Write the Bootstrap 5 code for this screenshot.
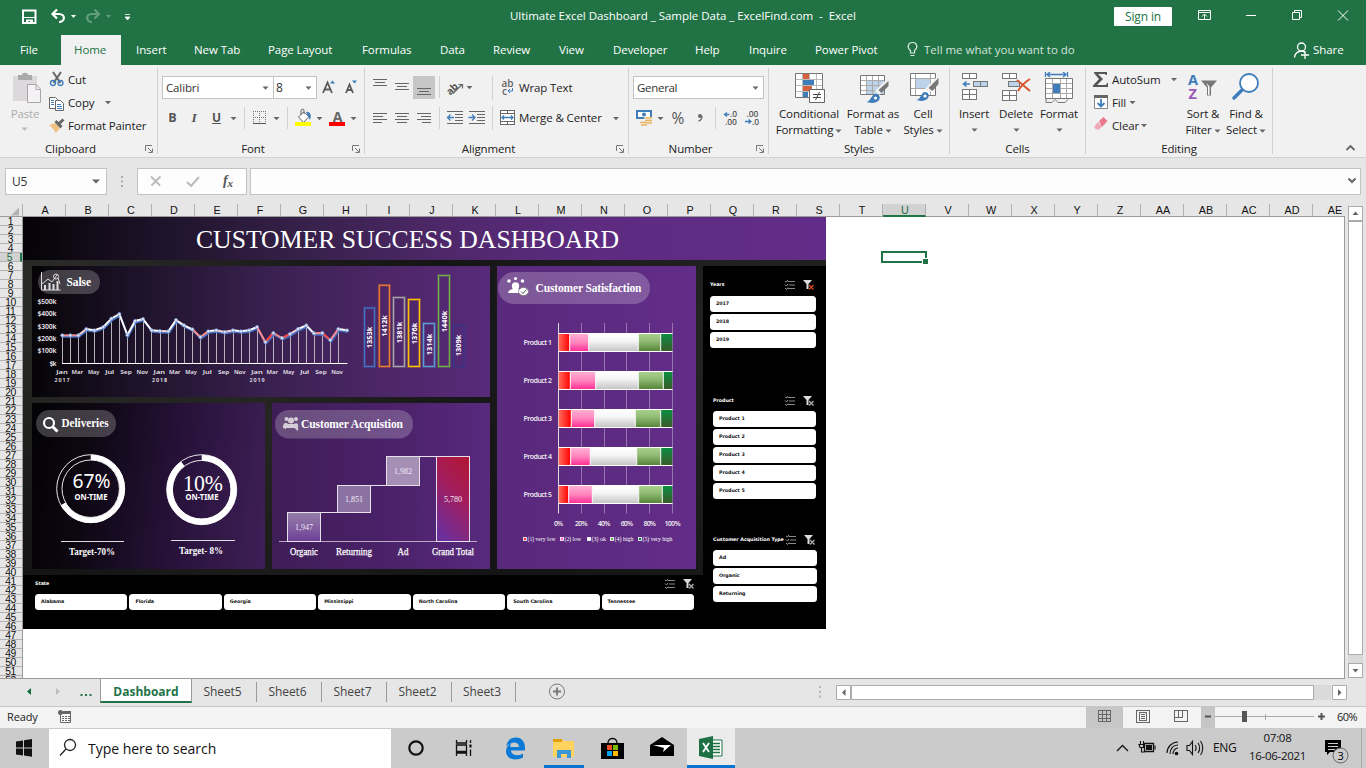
<!DOCTYPE html>
<html lang="en">
<head>
<meta charset="utf-8">
<title>Ultimate Excel Dashboard</title>
<link rel="stylesheet" href="https://cdn.jsdelivr.net/npm/bootstrap@5.3.0/dist/css/bootstrap.min.css">
<script src="https://cdn.jsdelivr.net/npm/bootstrap@5.3.0/dist/js/bootstrap.bundle.min.js"></script>
<style>
:root{--xl:#217346}
body{width:1366px;height:768px;overflow:hidden;font-family:"Open Sans","Noto Sans",sans-serif;font-size:11.5px;letter-spacing:-.13px;line-height:16px;color:#222;background:#e6e6e6}
svg{display:block;flex:none}
svg.ov{overflow:visible}
.ln{shape-rendering:crispEdges}
.titlebar{height:35px;background:var(--xl);color:#fff;display:grid;grid-template-columns:510px 604px 58px 194px;align-items:center;padding-bottom:3px}
.titlebar .doc{letter-spacing:-.03px}
.signin{background:#fff;color:var(--xl);height:19px;line-height:19px;font-size:12px;border-radius:1px}
.tabs{height:30px;background:var(--xl);display:grid;grid-template-columns:8px 53px 60px 60px 74px 94px 78px 53px 66px 54px 82px 54px 66px 103px 19px 369px 20px 1fr;color:#fff;line-height:30px;white-space:nowrap;letter-spacing:-.08px}
.tabs a{color:#fff;text-decoration:none;padding-left:13px}
.tabs a:nth-of-type(1){padding-left:12px}
.tabs a.active{background:#f1f1f1;color:var(--xl)}
.tabs a.wide{padding-left:15px}
.tabs .tell{color:#d3e3da;letter-spacing:-.02px}
.ribbon{height:93px;background:#f1f1f1;border-bottom:1px solid #d2d2d2;white-space:nowrap}
.grp{position:relative;height:92px;border-right:1px solid transparent;border-image:linear-gradient(transparent 4px,#d0d0d0 4px,#d0d0d0 88px,transparent 88px) 1;flex:none}
.glabel{position:absolute;left:0;right:0;bottom:0;height:16px;text-align:center}
.glabel.launch{right:16px}
.g-clip{width:158px}.g-font{width:207px}.g-align{width:264px}.g-num{width:140px}.g-sty{width:181px}.g-cells{width:136px}.g-edit{width:187px}
.r1{padding-top:11px;height:35px}
.r2{height:30px;padding-top:6px}
.l1{padding-top:6px;height:26px}.l2{padding-top:3px;height:23px}.l3{padding-top:3px}
.l1 b,.l2 b,.l3 b{font-weight:400;position:relative;top:1px}
.rt{padding:4px 0 0 1px}
.edcol{width:96px;padding-left:5px}
.pick{height:23px;border:1px solid #c3c3c3;background:#fff;line-height:22px;padding-left:3px;color:#333}
.pick.wide{width:112px;margin-left:4px}.pick.narrow{width:44px;margin-left:-1px;padding-left:2px;font-size:12px}.pick.num{width:131px;margin-left:4px;letter-spacing:-.3px}
.pick svg{margin:9px 4px 0 0}
.big{display:grid;padding-top:7px}
.big>div{display:flex;flex-direction:column;align-items:center;text-align:center}
.big svg.i{margin-bottom:2px}
.big svg.c{display:inline;margin-left:2px}
.g-sty .big{grid-template-columns:68px 60px 40px;padding-left:6px}
.g-cells .big{grid-template-columns:42px 42px 44px;padding-left:3px}
.g-edit .big{grid-template-columns:42px 44px}
.formula{height:46px;padding-top:10px}
.fbox{height:27px;border:1px solid #c3c3c3;background:#fdfdfd}
.namebox{width:102px;margin-left:5px;padding-left:6px;line-height:25px;font-size:12px;color:#333}
.fx{width:110px}.fin{width:1111px;margin-left:3px}
.colhead{height:13px;width:1345px;overflow:hidden;font:10.8px/13px "Liberation Sans",sans-serif;letter-spacing:0;color:#111}
.colhead>div{width:43px;flex:none;text-align:center;border-right:1px solid #b1b1b1;border-bottom:1px solid #9b9b9b;padding-left:2px;height:13px}
.colhead>div:first-child{width:23px}
.colhead>div.sel{background:#d2d2d2;color:#1e6a42;border-bottom:2px solid var(--xl)}
.sheet{height:461px}
.rowhead{width:23px;border-right:1px solid #9b9b9b;overflow:hidden;font:10.3px/9px "Liberation Sans",sans-serif;letter-spacing:-.4px;color:#111;height:461px}
.rowhead>div{height:9px;border-bottom:1px solid #b3b3b3;text-align:center;padding-right:1px}
.rowhead>div.sel{background:#d2d2d2;color:#1e6a42;border-right:2px solid var(--xl)}
.cells{position:relative;width:1322px;background:#fff;border-right:1px solid #9b9b9b;border-bottom:1px solid #9b9b9b;height:462px}
.cursor{position:absolute;left:858px;top:34px;width:46px;height:12px;border:2px solid var(--xl)}
.cursor::after{content:"";position:absolute;right:-4px;bottom:-4px;width:7px;height:7px;background:var(--xl);border:1px solid #fff}
.dash{width:803px;height:412px;background:radial-gradient(circle at 5% 20%,#2d2d2b,transparent 30%),radial-gradient(circle at 30% 50%,#252524,transparent 40%),radial-gradient(circle at 90% 30%,#252525,transparent 40%),#151515;display:grid;grid-template-columns:9px 233px 7px 218px 7px 199px 7px 123px;grid-template-rows:43px 6px 131px 6px 166px 6px 54px;letter-spacing:0;color:#fff}
.dash .head{grid-area:1/1/2/9;background:linear-gradient(90deg,#050306,#1d1228 16%,#352048 34%,#4e2869 52%,#5c2b80 70%,#622d88);font:26px/45px "Liberation Serif",serif;padding-left:173px}
.p-sales{grid-area:3/2/4/5;background:linear-gradient(90deg,#060407,#1d1228 22%,#38204e 50%,#4c2666 75%,#582a7a)}
.p-del{grid-area:5/2/6/3;background:linear-gradient(97deg,#030204,#0d0712 25%,#27123a 62%,#3f1f57)}
.p-acq{grid-area:5/4/6/5;background:linear-gradient(90deg,#3f1d57,#4a2168 50%,#58297d)}
.p-sat{grid-area:3/6/6/7;background:linear-gradient(90deg,#59297c,#622d88)}
.p-sl{grid-area:3/8/8/9;background:#000}
.p-st{grid-area:7/1/8/8;background:#000;padding:4px 0 0 12px}
.slicer{font-family:"DejaVu Sans",sans-serif;font-weight:bold;font-size:4.8px;line-height:10px;letter-spacing:-.05px;white-space:nowrap}
.slicer .sh{height:10px;display:flex;justify-content:space-between}
.slicer .it{background:#fff;color:#111;height:16px;line-height:15px;border-radius:3.5px;margin-bottom:2px;padding-left:6px}
.slicer .sh+*{margin-top:6px}
.s-y{padding:14px 10px 0 7px;height:131px}
.s-y .sh svg{margin-right:2px}
.s-p{padding:0 10px 0 10px;height:139px;margin-top:-1px}
.s-p .sh+*{margin-top:5px}
.s-p .sh svg,.s-a .sh svg{margin-right:2px}
.s-a{padding:0 9px 0 10px}
.s-a .sh+*{margin-top:5px}
.stw{width:659px}
.hz{display:grid;grid-template-columns:repeat(7,1fr);gap:2px;width:659px;margin-top:5px}
.vscroll{width:15px;margin-left:3px;margin-top:-11px;height:472px}
.vscroll .thumb{height:434px}.vscroll .arr{height:15px}.vscroll .rest{background:#dadada}
.sb{background:#fff;border:1px solid #ababab}
.stabs{height:28px;color:#444;font-size:12px;line-height:26px;letter-spacing:0}
.stabs .nm{width:65px;height:20px;line-height:20px;text-align:center;border-right:1px solid #9b9b9b;margin-top:4px;padding-right:3px;flex:none;letter-spacing:-.1px}
.stabs .nm.last{width:64px}
.stabs .act{width:92px;height:25px;background:#fff;border:1px solid #9b9b9b;border-top:0;border-bottom:2px solid var(--xl);color:var(--xl);font-weight:bold;text-align:center;line-height:27px;flex:none;letter-spacing:0}
.status{height:22px;background:#f3f3f3;border-top:1px solid #c6c6c6;font-size:11px;line-height:20px}
.status .rd{width:58px;padding-left:7px}.status .zm{width:29px;letter-spacing:-.5px}
.taskbar{height:40px;background:#cbcbcb;color:#111}
.search{width:342px;height:39px;margin-top:1px;background:#fff;font-size:14px;letter-spacing:-.03px;line-height:39px}
.lang{width:35px;line-height:40px;font-size:12px;letter-spacing:-.4px}
.clock{width:59px;line-height:18px;padding-top:1px;letter-spacing:-.3px}
</style>
</head>
<body class="d-flex flex-column">
<svg width="0" height="0" class="position-absolute"><defs>
<path id="car" d="M-3-1.5h6L0 1.7z" fill="#666"/>
<g id="lau" fill="none" stroke="#777"><path d="M.5 6V.5H7"/><path d="M3 3l4 4M7.5 3.500V7.500H3.500"/></g>
<linearGradient id="lr" x2="1" y2="0"><stop stop-color="#ff6a5c"/><stop offset="1" stop-color="#f00"/></linearGradient>
<linearGradient id="lp" x2="0" y2="1"><stop stop-color="#ffb2d4"/><stop offset=".5" stop-color="#ff85bd"/><stop offset="1" stop-color="#ff2a94"/></linearGradient>
<linearGradient id="lw" x2="0" y2="1"><stop stop-color="#fff"/><stop offset=".4" stop-color="#f6f6f6"/><stop offset="1" stop-color="#c3c3c3"/></linearGradient>
<linearGradient id="lg" x2="0" y2="1"><stop stop-color="#a9d18e"/><stop offset=".4" stop-color="#93bd77"/><stop offset="1" stop-color="#548235"/></linearGradient>
<linearGradient id="ld" x2="0" y2="1"><stop stop-color="#0a8e43"/><stop offset="1" stop-color="#3c5a28"/></linearGradient>
<linearGradient id="wg" x2="0" y2="1"><stop stop-color="#a48fb6" stop-opacity=".85"/><stop offset="1" stop-color="#6c3d96"/></linearGradient>
<linearGradient id="wr" x1=".7" x2=".3" y2="1"><stop stop-color="#b0173b"/><stop offset=".4" stop-color="#a31d5c"/><stop offset="1" stop-color="#6b2f9b"/></linearGradient>
<g id="sic" fill="none" stroke="#9a9a9a" stroke-width="1"><path d="M3 1.500h7M4 5h6M3 8.500h7" stroke="#888"/><path d="M0 1l1.500 1L3 0M0 4.500L1.500 6 3 4M0 8l1.500 1.500L3 7.500"/></g>
<g id="sfl"><path d="M18 0h9l-3.500 4v5h-2V4z" fill="#ddd"/><path d="M24 5l4.500 4.500m0-4.500L24 9.500" stroke="currentColor" stroke-width="1.400"/></g>
</defs></svg>

<header class="titlebar">
  <svg width="140" height="32" viewBox="0 0 140 32"><path d="M23 10.500h12.500v12.500H23z" fill="none" stroke="#fff" stroke-width="2"/><path d="M22 17h14v1H22z" fill="#fff"/><path d="M26 19.500h7V23h-3v-2h-1.500v2H26z" fill="#fff"/>
    <g fill="none" stroke="#fff" stroke-width="2.200"><path d="M53 14h6c7 0 6 8 0 8"/><path d="M57 9.500l-4.500 4.500 4.500 4.500"/><g opacity=".3"><path d="M98 14h-6c-7 0-6 8 0 8"/><path d="M94.500 9.500l4.500 4.500-4.500 4.500"/></g></g>
    <path d="M71 15h5l-2.500 3z" fill="#fff"/><path d="M106 15h5l-2.500 3z" fill="#fff" opacity=".3"/><path d="M125 14.500h5M125 17h5l-2.500 3z" fill="#fff" stroke="#fff" stroke-width=".8"/></svg>
  <span class="doc text-nowrap">Ultimate Excel Dashboard _ Sample Data _ ExcelFind.com &nbsp;-&nbsp; Excel</span>
  <span class="signin text-center">Sign in</span>
  <svg width="194" height="32" viewBox="1172 0 194 32" fill="none" stroke="#fff" class="ov"><path d="M1198.500 10.500h12v9h-12zM1198.500 12.500h12M1204.500 19v-5M1202 16.500l2.500-2.500 2.500 2.500"/><path d="M1246 15.500h10"/><path d="M1292.500 12.500h7v7h-7zM1294.500 12.500v-2h7v7h-2"/><path d="M1338 10.500l10 10M1348 10.500l-10 10"/></svg>
</header>

<nav class="tabs">
  <i></i><a>File</a><a class="active">Home</a><a class="wide">Insert</a><a>New Tab</a><a>Page Layout</a><a>Formulas</a><a>Data</a><a>Review</a><a>View</a><a>Developer</a><a>Help</a><a>Inquire</a><a>Power Pivot</a>
  <svg width="14" height="30" viewBox="905 35 14 30" fill="none" stroke="#dbe9e1" stroke-width="1.200"><path d="M910.500 53v-2.500c-4-3-2.500-8 2-8s6 5 2 8V53zM910.500 55.500h4"/></svg>
  <span class="tell">Tell me what you want to do</span>
  <svg width="18" height="30" viewBox="1293 35 18 30" fill="none" stroke="#fff" stroke-width="1.300"><circle cx="1301.500" cy="47" r="4"/><path d="M1294.500 57.500c.5-4 3-6 6.500-6.500 2 0 3 .5 4 1.500M1301 55h8M1305 51v8"/></svg>
  <span>Share</span>
</nav>

<section class="ribbon d-flex">
  <div class="grp g-clip d-flex">
    <svg width="48" height="75" viewBox="0 65 48 75"><path d="M13 76h24v25H13z" fill="#dcd8dc"/><path d="M18 75h4c0-3 6-3 6 0h4v5H18z" fill="#aaa"/><path d="M27.500 84.500h8.500l4.500 4.500v13.500h-13z" fill="#f5f2f6" stroke="#a8a8a8"/><path d="M36 84.500v5h4.500" fill="none" stroke="#a8a8a8"/><text x="25" y="118" text-anchor="middle" fill="#ababab">Paste</text><use href="#car" x="24.500" y="129" opacity=".4"/></svg>
    <div class="d-flex flex-column">
      <div class="d-flex l1"><svg width="20" height="20" viewBox="48 71 20 20" fill="none"><path d="M53 72l7.500 11M61 72l-7.500 11" stroke="#666" stroke-width="2"/><circle cx="53" cy="83" r="2.500" stroke="#3f7dba" stroke-width="1.300"/><circle cx="60.500" cy="83" r="2.500" stroke="#3f7dba" stroke-width="1.300"/></svg><b>Cut</b></div>
      <div class="d-flex l2"><svg width="20" height="20" viewBox="48 92 20 20" stroke="#666" fill="#fff"><path d="M49.500 95.500h6l2 2v9h-8z"/><path d="M51 98.500h3M51 100.500h3M51 102.500h3" stroke="#3f7dba"/><path d="M55.500 98.500h5l3 3v7h-8z"/><path d="M57 102.500h4M57 104.500h5M57 106.500h5" stroke="#3f7dba"/></svg><b>Copy</b><svg width="24" height="16" viewBox="95 94 24 16"><use href="#car" x="109" y="102.500"/></svg></div>
      <div class="d-flex l3"><svg width="20" height="18" viewBox="48 116 20 18"><path d="M49 124l7-2 4 5-4 5c-2-3-4-6-7-8z" fill="#eec180"/><path d="M54.500 121l2-2 6 6-2 2.500z" fill="#666"/><path d="M58.500 123l5-4.500" stroke="#666" stroke-width="3"/></svg><b>Format Painter</b></div>
    </div>
    <div class="glabel launch">Clipboard</div><svg class="position-absolute bottom-0 end-0 mb-1 me-1" width="8" height="8"><use href="#lau"/></svg>
  </div>

  <div class="grp g-font">
    <div class="d-flex r1"><div class="pick wide d-flex justify-content-between">Calibri<svg width="7" height="4" viewBox="-3.500 -2 7 4"><use href="#car"/></svg></div><div class="pick narrow d-flex justify-content-between">8<svg width="7" height="4" viewBox="-3.500 -2 7 4"><use href="#car"/></svg></div>
      <svg width="44" height="24" viewBox="317 76 44 24" fill="none" stroke="#5a5a5a" stroke-width="1.800"><path d="M323 93l4.500-10.500 4.500 10.500M325 89.500h5"/><path d="M346 93l3.500-8.500 3.500 8.500M347.500 90h4.500"/><path d="M330 83.500h5l-2.500-3z" fill="#3f7dba" stroke="none"/><path d="M352 80.500h5l-2.500 3z" fill="#3f7dba" stroke="none"/></svg></div>
    <div class="r2"><svg width="205" height="24" viewBox="158 106 205 24" class="ln"><g shape-rendering="auto"><text x="172.500" y="122" text-anchor="middle" font-weight="bold" fill="#555" font-size="12.500">B</text><text x="194" y="122" text-anchor="middle" font-family="Liberation Serif" font-style="italic" font-weight="bold" fill="#555" font-size="13.500">I</text><text x="216.500" y="121.500" text-anchor="middle" font-weight="bold" fill="#555" font-size="12">U</text><text x="337.500" y="122" text-anchor="middle" font-weight="bold" fill="#666" font-size="14">A</text><use href="#car" x="233.500" y="118.500"/><use href="#car" x="276.500" y="118.500"/><use href="#car" x="319.500" y="118.500"/><use href="#car" x="353.500" y="118.500"/>
      <path d="M298.500 117l5-5 5.500 4.500-5.500 6z" fill="#fff" stroke="#666"/><path d="M301 115v-5c1-1 3-1 3 0v4" fill="none" stroke="#666"/><path d="M306 112c4-1 6 3 4 8l-2-4z" fill="#3f7dba"/></g>
      <path d="M212 123.500h9" stroke="#555"/><path d="M244.500 107v22M287.500 107v22" stroke="#d0d0d0"/><path d="M253.500 111v12M265.500 111v12M259.500 111v12M253 111.500h13M253 117.500h13" stroke="#777" stroke-dasharray="1 1"/><path d="M253 123.500h13" stroke="#555"/><path d="M295 122h16v4h-16z" fill="#ff0"/><path d="M329 122h16v4h-16z" fill="#f00"/></svg></div>
    <div class="glabel launch">Font</div><svg class="position-absolute bottom-0 end-0 mb-1 me-1" width="8" height="8"><use href="#lau"/></svg>
  </div>

  <div class="grp g-align">
    <div class="d-flex r1"><svg width="153" height="24" viewBox="365 76 153 24"><path d="M413 76h22v23h-22z" fill="#c6c6c6"/><g stroke="#666" class="ln"><path d="M373 79.500h14M375 82.500h10M373 85.500h14M395 83.500h14M397 86.500h10M395 89.500h14M417 88.500h14M419 91.500h10M417 94.500h14"/><path d="M439.500 76v22M492.500 76v24" stroke="#d0d0d0"/></g><text x="447" y="92" font-size="10" fill="#555" font-weight="bold" transform="rotate(-45 453 90)">ab</text><path d="M453 93.500l9-9M458.500 84.500h4v4" stroke="#666" fill="none" stroke-width="1.200"/><use href="#car" x="469.500" y="87.500"/><text x="501.500" y="87" font-size="10" font-weight="600" fill="#666">ab</text><text x="502" y="94.500" font-size="10" font-weight="600" fill="#666">c</text><path d="M512.500 88v3h-4M510 89l-2 2 2 2" stroke="#3f7dba" fill="none"/></svg><span class="rt">Wrap Text</span></div>
    <div class="d-flex r2"><svg width="153" height="24" viewBox="365 106 153 24"><g stroke="#666" class="ln"><path d="M373 113.500h14M373 116.500h10M373 119.500h14M373 122.500h9M395 113.500h14M397 116.500h10M395 119.500h14M397 122.500h10M417 113.500h14M421 116.500h10M417 119.500h14M422 122.500h9"/><path d="M447 111.500h16M455 114.500h8M455 117.500h8M455 120.500h8M447 123.500h16M469 111.500h16M477 114.500h8M477 117.500h8M477 120.500h8M469 123.500h16"/><path d="M439.500 107v22M492.500 104v26" stroke="#d0d0d0"/><path d="M500.500 110.500h14v14h-14zM500.500 113.500h14M500.500 121.500h14M507.500 110v3M507.500 122v3" fill="#fff" /></g><path d="M454 117.500h-6M450.500 114.500l-3 3 3 3M468.500 117.500h6M472 114.500l3 3-3 3M502 117.500h11M504 115.500l-2 2 2 2M511 115.500l2 2-2 2" stroke="#3f7dba" fill="none" stroke-width="1.300"/></svg><span class="rt">Merge &amp; Center</span><svg width="22" height="24" viewBox="603 106 22 24"><use href="#car" x="617" y="118.500"/></svg></div>
    <div class="glabel launch">Alignment</div><svg class="position-absolute bottom-0 end-0 mb-1 me-1" width="8" height="8"><use href="#lau"/></svg>
  </div>

  <div class="grp g-num">
    <div class="r1"><div class="pick num d-flex justify-content-between">General<svg width="7" height="4" viewBox="-3.500 -2 7 4"><use href="#car"/></svg></div></div>
    <div class="r2"><svg width="138" height="24" viewBox="629 106 138 24"><path d="M636 110h16v9h-16z" fill="#3f7dba"/><path d="M638 112h12v5h-12z" fill="#fff"/><circle cx="644" cy="114.500" r="2" fill="#3f7dba"/><path d="M644 117h8v7h-4v2h-7v-5h4z" fill="#f1f1f1"/><path d="M645 118h7M645 120.500h7M646 123h6M640 122.500h6M641 125h6" stroke="#e8b45f" stroke-width="1.600"/><use href="#car" x="660.500" y="118.500"/><text x="671.500" y="123.500" font-size="15.500" fill="#555">%</text><circle cx="700" cy="116" r="2" fill="#666"/><path d="M702 116c0 3-1 4.500-3.500 5" stroke="#666" fill="none" stroke-width="1.300"/><path d="M715.500 107v22" stroke="#d0d0d0"/><g font-size="8.500" font-weight="600" fill="#555"><text x="730" y="117">.0</text><text x="725" y="124.500">.00</text><text x="746.500" y="117">.00</text><text x="752" y="124.500">.0</text></g><path d="M729.500 114.500h-5M727 112.500l-2.500 2 2.500 2M745 121.500h6M748.500 119.500l2.500 2-2.500 2" stroke="#3f7dba" fill="none" stroke-width="1.300"/></svg></div>
    <div class="glabel launch">Number</div><svg class="position-absolute bottom-0 end-0 mb-1 me-1" width="8" height="8"><use href="#lau"/></svg>
  </div>

  <div class="grp g-sty"><div class="big">
    <div><svg class="i" width="32" height="32" viewBox="793 72 32 32"><path d="M795.500 73.500h27v24h-27z" fill="#fff"/><path d="M795.500 79.500h27M795.500 85.500h27M795.500 91.500h27M802.500 74v24M809.500 74v24M816.500 74v24" stroke="#bbb" class="ln"/><path d="M795.500 73.500h27v24h-27z" fill="none" stroke="#777"/><path d="M803 74h6v5h-6zM803 86h9v5h-9z" fill="#d9603c"/><path d="M803 80h11v5h-11zM803 92h5v5h-5z" fill="#3f7dba"/><path d="M809.500 89.500h15v13h-15z" fill="#fff" stroke="#666"/><path d="M813 94.500h8M813 97.500h8M819.500 92l-4 8" stroke="#444"/></svg>Conditional<span>Formatting<svg class="c" width="7" height="6" viewBox="-3.500 -3 7 6"><use href="#car"/></svg></span></div>
    <div><svg class="i" width="32" height="32" viewBox="857 72 32 32"><path d="M860.500 75.500h24v19h-24z" fill="#fff"/><path d="M867 80h17v14h-17z" fill="#bdd3ea"/><path d="M860 80.500h25M860 85.500h25M860 90.500h25M866.500 75v20M872.500 75v20M878.500 75v20" stroke="#aaa" class="ln"/><path d="M860.500 75.500h24v19h-24z" fill="none" stroke="#777"/><path d="M888 82l-11 11" stroke="#f1f1f1" stroke-width="6"/><path d="M888.500 81v5l-7 7-3-3z" fill="#777"/><path d="M866 102c5 0 5-8 10-8 3 0 5 3 3 6-3 4-9 3-13 2z" fill="#3f7dba"/><circle cx="875.500" cy="98" r="1.600" fill="#fff"/></svg>Format as<span>Table<svg class="c" width="7" height="6" viewBox="-3.500 -3 7 6"><use href="#car"/></svg></span></div>
    <div><svg class="i" width="32" height="32" viewBox="907 72 32 32"><path d="M910.500 73.500h25v22h-25z" fill="#fff"/><path d="M915 78h15v11h-15z" fill="#bdd3ea"/><path d="M910 78.500h26M910 88.500h26M915.500 73v23M930.500 73v23" stroke="#aaa" class="ln"/><path d="M910.500 73.500h25v22h-25z" fill="none" stroke="#777"/><path d="M938 80l-11 11" stroke="#f1f1f1" stroke-width="6"/><path d="M938.500 78v6l-6 7-4-3z" fill="#777"/><path d="M916 100c5 0 5-8 9-8 3 0 5 3 3 6-3 4-9 3-12 2z" fill="#3f7dba"/><circle cx="925" cy="96" r="1.600" fill="#fff"/></svg>Cell<span>Styles<svg class="c" width="7" height="6" viewBox="-3.500 -3 7 6"><use href="#car"/></svg></span></div>
    </div><div class="glabel">Styles</div></div>

  <div class="grp g-cells"><div class="big">
    <div><svg class="i" width="32" height="32" viewBox="958 72 32 32"><g fill="#fff" stroke="#777" class="ln"><path d="M962.500 73.500h14v5h-14zM969.500 73v6M962.500 89.500h14v10h-14zM969.500 89v11M962 94.500h15"/><path d="M973.500 81.500h14v5h-14z" fill="#bdd3ea"/><path d="M980.500 81v6"/></g><path d="M970 84h-6M966.500 81.500l-3 2.500 3 2.500" stroke="#3f7dba" stroke-width="1.600" fill="none"/></svg>Insert<svg width="7" height="15" viewBox="-3.500 -8 7 15"><use href="#car"/></svg></div>
    <div><svg class="i" width="32" height="32" viewBox="1001 72 32 32"><g fill="#fff" stroke="#777" class="ln"><path d="M1003.500 73.500h14v5h-14zM1010.500 73v6M1003.500 90.500h14v10h-14zM1010.500 90v11M1003 95.500h15"/><path d="M1009.500 81.500h11v5h-11z" fill="#bdd3ea"/></g><path d="M1018 80l13 11M1031 79c-5 3-9 7-12 12" stroke="#d9552f" stroke-width="2" fill="none"/></svg>Delete<svg width="7" height="15" viewBox="-3.500 -8 7 15"><use href="#car"/></svg></div>
    <div><svg class="i" width="32" height="32" viewBox="1043 72 32 32"><path d="M1045.500 78.500h27v20h-27z" fill="#fff"/><path d="M1045 83.500h28M1045 93.500h28M1052.500 78v21M1060.500 78v21M1066.500 78v21M1045 88.500h28" stroke="#aaa" class="ln"/><path d="M1045.500 78.500h27v20h-27zM1046 98.500v4h6l3-3 3 3h7l3-3" fill="none" stroke="#777"/><path d="M1053 84h7v9h-7z" fill="#3f7dba"/><path d="M1045.500 72v5M1067.500 72v5M1047 74.500h19M1050 72l-3 2.500 3 2.500M1063 72l3 2.500-3 2.500" stroke="#3f7dba" fill="none" stroke-width="1.300"/></svg>Format<svg width="7" height="15" viewBox="-3.500 -8 7 15"><use href="#car"/></svg></div>
    </div><div class="glabel">Cells</div></div>

  <div class="grp g-edit d-flex">
    <div class="flex-shrink-0 edcol">
      <div class="d-flex l1"><svg width="21" height="20" viewBox="1091 70 21 20"><path d="M1094 71h13v3h-1l-1-1h-7l5 5-6 6h9l1-2h1v4h-15v-1.500l6-6.500-5-6z" fill="#555"/></svg><b>AutoSum</b><svg width="20" height="16" viewBox="1160 71 20 16"><use href="#car" x="1174" y="79.500"/></svg></div>
      <div class="d-flex l2"><svg width="21" height="18" viewBox="1091 94 21 18"><path d="M1094.500 96.500h13v12h-13z" fill="#fff" stroke="#888"/><path d="M1094 95h14v3h-14z" fill="#666"/><path d="M1101 99v7M1097.500 103l3.500 3.500 3.500-3.500" stroke="#3f7dba" fill="none" stroke-width="1.800"/></svg><b>Fill</b><svg width="14" height="16" viewBox="1125 94 14 16"><use href="#car" x="1131.500" y="102.500"/></svg></div>
      <div class="d-flex l3"><svg width="21" height="18" viewBox="1091 117 21 18"><path d="M1099 121l4.500-4 4 4-5.500 6z" fill="#e8798f"/><path d="M1098 122l4 4.500-3 3h-3l-2-2.500z" fill="#f1a9b8"/></svg><b>Clear</b><svg width="14" height="16" viewBox="1139 117 14 16"><use href="#car" x="1144" y="125.500"/></svg></div>
    </div>
    <div class="big">
      <div><svg class="i" width="32" height="32" viewBox="1187 72 32 32"><g font-weight="bold" font-size="14.500"><text x="1188" y="85" fill="#3f7dba">A</text><text x="1188.500" y="99" fill="#9b59b6">Z</text></g><path d="M1201 80.500h16l-6 7v8h-4v-8z" fill="#777"/><path d="M1206.500 83l3 3.500v9l-1.500-1V87z" fill="#fff"/></svg>Sort &amp;<span>Filter<svg class="c" width="7" height="6" viewBox="-3.500 -3 7 6"><use href="#car"/></svg></span></div>
      <div><svg class="i" width="32" height="32" viewBox="1230 72 32 32"><circle cx="1249" cy="83" r="9" fill="#fff" stroke="#3f7dba" stroke-width="1.800"/><path d="M1242 90l-8 8" stroke="#3f7dba" stroke-width="3.500" stroke-linecap="round"/></svg>Find &amp;<span>Select<svg class="c" width="7" height="6" viewBox="-3.500 -3 7 6"><use href="#car"/></svg></span></div>
    </div>
    <div class="glabel">Editing</div></div>
  <svg class="ms-auto me-2 mt-auto mb-1" width="14" height="10" viewBox="1 0 14 10"><path d="M3.500 7l4-4 4 4" fill="none" stroke="#666" stroke-width="1.800"/></svg>
</section>

<section class="formula d-flex">
  <div class="fbox namebox d-flex justify-content-between">U5<svg width="20" height="25" viewBox="0 0 20 25"><path d="M6 10.500h8l-4 4z" fill="#666"/></svg></div>
  <svg width="30" height="27" viewBox="107 168 30 27"><path d="M121 176h2v2h-2zM121 180.500h2v2h-2zM121 185h2v2h-2z" fill="#aaa"/></svg>
  <div class="fbox fx"><svg width="108" height="25" viewBox="138 169 108 25"><path d="M151 176.500l9 9M160.500 176.500l-9 9" stroke="#bbb" stroke-width="1.800"/><path d="M187 182l4 4 8-9" stroke="#bbb" stroke-width="2" fill="none"/><text x="223" y="185" font-family="Liberation Serif" font-style="italic" font-weight="bold" font-size="14" fill="#555">f</text><text x="227.500" y="186.500" font-family="Liberation Serif" font-style="italic" font-weight="bold" font-size="11" fill="#555">x</text></svg></div>
  <div class="fbox fin d-flex justify-content-end"><svg width="16" height="25" viewBox="0 0 16 25"><path d="M4.500 9.500l3.500 3.500 3.500-3.500" fill="none" stroke="#666" stroke-width="2"/></svg></div>
</section>
<div class="colhead d-flex" id="cols"><div><svg width="20" height="12" viewBox="2 0 20 12"><path d="M19 3.500v8h-8z" fill="#b4b4b4"/></svg></div></div>

<main class="sheet d-flex">
  <div class="rowhead flex-shrink-0" id="rows"></div>
  <div class="cells flex-shrink-0">
    <div class="dash">
      <div class="head"><svg width="440" height="43"><text x="0" y="31" fill="#fff" textLength="423" lengthAdjust="spacingAndGlyphs">CUSTOMER SUCCESS DASHBOARD</text></svg></div>
      <div class="p-sales"><svg width="458" height="131" viewBox="32 266 458 131" id="sales"><rect x="38" y="270" width="62" height="24" rx="12" fill="#fff" fill-opacity=".22"/><g stroke="#ddd" fill="none"><path d="M41.500 272v18h19M42 284l6-5 4 3 5-7"/><path d="M45 290v-5M49.500 290v-7M53.500 290v-6M57.500 290v-9" stroke-width="2"/><circle cx="56" cy="276.500" r="2.500"/><path d="M58 278l2 6"/></g><text x="66.500" y="286" font-family="Liberation Serif" font-weight="bold" font-size="11.500" fill="#fff" textLength="24.500">Salse</text></svg></div>
      <div class="p-del"><svg width="233" height="166" viewBox="32 403 233 166" fill="#fff" text-anchor="middle"><rect x="36" y="410" width="80" height="27" rx="13.500" fill-opacity=".22"/><circle cx="49" cy="423" r="5" fill="none" stroke="#fff" stroke-width="2.200"/><path d="M52.500 426.500l5 5" stroke="#fff" stroke-width="3"/>
        <g font-family="Liberation Serif" font-weight="bold"><text x="85" y="427" font-size="11.500" textLength="47" lengthAdjust="spacingAndGlyphs">Deliveries</text><text x="92" y="555" font-size="10.500" textLength="46" lengthAdjust="spacingAndGlyphs">Target-70%</text><text x="201" y="554" font-size="10.500" textLength="44" lengthAdjust="spacingAndGlyphs">Target- 8%</text></g>
        <g fill="none" stroke="#fff"><circle cx="90.700" cy="488.700" r="34" stroke-width=".9"/><circle cx="90.700" cy="488.700" r="28.700" stroke-width=".9"/><circle cx="90.700" cy="488.700" r="31.500" stroke-width="5.400" pathLength="100" stroke-dasharray="67 33" transform="rotate(-90 90.700 488.700)"/><circle cx="201.700" cy="489.700" r="35" stroke-width=".9"/><circle cx="201.700" cy="489.700" r="29.300" stroke-width=".9"/><circle cx="201.700" cy="489.700" r="32" stroke-width="6" pathLength="100" stroke-dasharray="90 10" transform="rotate(-90 201.700 489.700)"/></g>
        <text x="91.500" y="488" font-family="Noto Sans" font-size="19" textLength="38" lengthAdjust="spacingAndGlyphs">67%</text><text x="91" y="500" font-family="Noto Sans" font-weight="bold" font-size="8.500" textLength="33" lengthAdjust="spacingAndGlyphs">ON-TIME</text>
        <text x="203" y="491" font-family="Liberation Serif" font-size="23" textLength="40" lengthAdjust="spacingAndGlyphs">10%</text><text x="202" y="500" font-family="Noto Sans" font-weight="bold" font-size="8.500" textLength="33" lengthAdjust="spacingAndGlyphs">ON-TIME</text>
        <path d="M61 541.500h63M171 540.500h64" stroke="#ddd"/></svg></div>
      <div class="p-acq"><svg width="218" height="166" viewBox="272 403 218 166" id="acq"><rect x="275" y="410" width="138" height="28.500" rx="14" fill="#fff" fill-opacity=".22"/><g fill="#d5ced8"><circle cx="291" cy="420.500" r="3"/><circle cx="286.500" cy="419" r="2"/><circle cx="296" cy="419" r="2"/><path d="M283 428c0-7 4-5 5-4h6c3-2 5 0 4 4l-2 1v-1h-10v1z"/><path d="M294 426l4 4" stroke="#d5ced8" stroke-width="1.800"/></g><text x="301" y="428" font-family="Liberation Serif" font-weight="bold" font-size="11.500" fill="#fff" textLength="102">Customer Acquistion</text></svg></div>
      <div class="p-sat"><svg width="199" height="303" viewBox="497 266 199 303" id="sat"><rect x="498" y="272" width="152" height="32" rx="16" fill="#fff" fill-opacity=".22"/><g fill="#fff"><circle cx="515.500" cy="286" r="3.700"/><path d="M508 293c1-6 14-6 15 0z"/><circle cx="509" cy="281" r="1.800"/><circle cx="515.500" cy="278.500" r="1.600"/><circle cx="522.500" cy="281" r="1.800"/><ellipse cx="523.500" cy="291.500" rx="5" ry="4" stroke="#777" stroke-width=".8"/></g><path d="M521 291.500l2 2 3.500-4" stroke="#555" fill="none"/><text x="535.500" y="292" font-family="Liberation Serif" font-weight="bold" font-size="11.500" fill="#fff" textLength="106">Customer Satisfaction</text></svg></div>
      <div class="p-sl slicer" id="slicers"></div>
      <div class="p-st slicer" id="states"></div>
    </div>
    <div class="cursor"></div>
  </div>
  <div class="vscroll d-flex flex-column">
    <div class="sb arr"><svg width="13" height="13"><path d="M3.500 8h6l-3-3.500z" fill="#666"/></svg></div>
    <div class="sb thumb"></div>
    <div class="rest flex-grow-1"></div>
    <div class="sb arr"><svg width="13" height="13"><path d="M3.500 5h6l-3 3.500z" fill="#666"/></svg></div>
  </div>
</main>

<div class="stabs d-flex">
  <svg width="100" height="28" viewBox="0 678 100 28"><path d="M0 678.500h100" stroke="#9b9b9b"/><path d="M31 688v7l-4-3.500z" fill="#0f6b39"/><path d="M56 688v7l4-3.500z" fill="#bdbdbd"/><path d="M80.500 694h2v2h-2zM85 694h2v2h-2zM89.500 694h2v2h-2z" fill="#217346"/></svg>
  <div class="act">Dashboard</div>
  <div class="nm">Sheet5</div><div class="nm">Sheet6</div><div class="nm">Sheet7</div><div class="nm">Sheet2</div><div class="nm last">Sheet3</div>
  <svg width="850" height="28" viewBox="516 678 850 28"><circle cx="557" cy="691.500" r="7.500" fill="none" stroke="#777"/><path d="M557 687.500v8M553 691.500h8" stroke="#777" stroke-width="1.800"/><path d="M819 686h2v2h-2zM819 691h2v2h-2zM819 695.500h2v2h-2z" fill="#b5b5b5"/><path d="M851 685h480v15H851z" fill="#dadada"/><path d="M836.500 685.500h14v14h-14zM851.500 685.500h462v14h-462zM1332.500 685.500h14v14h-14z" fill="#fff" stroke="#ababab"/><path d="M845.500 689v7l-3.500-3.500zM1338 689v7l3.500-3.500z" fill="#666"/></svg>
</div>
<footer class="status d-flex">
  <span class="rd">Ready</span>
  <svg width="14" height="20" viewBox="58 707 14 20"><path d="M60.500 712.500h10v10h-10z" fill="#fff" stroke="#666"/><path d="M63 711h8v3h-8z" fill="#666"/><circle cx="60.500" cy="712.500" r="2.500" fill="#666"/><path d="M62 716.500h8M62 718.500h8M62 720.500h8" stroke="#666" stroke-dasharray="2 1"/></svg>
  <svg class="ms-auto" width="251" height="21" viewBox="1086 707 251 21"><path d="M1086 707h37v21h-37zM1201 707h14v21h-14z" fill="#c6c6c6"/><g fill="none" stroke="#666" class="ln"><path d="M1098.500 710.500h12v11h-12zM1102.500 710v12M1106.500 710v12M1098 714.500h13M1098 718.500h13"/><path d="M1136.500 710.500h13v12h-13zM1139.500 712.500h7v8h-7zM1141 714.500h4M1141 716.500h4M1141 718.500h4"/><path d="M1174.500 710.500h13v11h-13zM1178.500 710v7M1182.500 710v7M1175 717.500h8"/><path d="M1215 716.500h99M1265.500 714v6" stroke="#aaa"/></g><path d="M1205 715.500h6v2h-6zM1318 715.500h7v2h-7zM1320.500 713h2v7h-2zM1242 711h5v11h-5z" fill="#555"/></svg>
  <span class="zm">60%</span>
</footer>
<div class="taskbar d-flex">
  <svg width="49" height="40" viewBox="0 728 49 40"><path d="M16 741.500l7-1v7h-7zM24 740.300l8-1.200v8.400h-8zM16 748.500h7v7l-7-1zM24 748.500h8v8.300l-8-1.200z" fill="#111"/></svg>
  <div class="search d-flex"><svg width="39" height="39" viewBox="49 729 39 39" fill="none" stroke="#222" stroke-width="1.300"><circle cx="70" cy="745" r="5.500"/><path d="M66 749l-6 6.500"/></svg><span>Type here to search</span></div>
  <svg width="722" height="40" viewBox="391 728 722 40"><circle cx="416" cy="748" r="6.700" fill="none" stroke="#111" stroke-width="2.200"/><g fill="none" stroke="#111" stroke-width="1.300"><path d="M456.500 740v3h10v-3M456.500 756v-3h10v3M456.500 745h10v6.500h-10zM470.500 740v3M470.500 749.500v6.500"/></g><path d="M469.500 744.500h2v3h-2z"/>
    <path d="M506 747.500c1-8 6-10 10-10 6 0 9 5 9 10v3h-14c0 5 8 6 12 3v4c-7 4-17 2-17-6 0-4 2-7 6-9-1 1-2 3-1.500 4.500h8.500c0-6-8-6-13-.5z" fill="#0a7ad6"/>
    <path d="M553 739h9l2 2h10v16h-21z" fill="#ffd35e"/><path d="M553 739h9v3h-9z" fill="#e0a008"/><path d="M557 758v-8h14v8h-4v-4h-6v4z" fill="#3c97d8"/><path d="M544 765h40v3h-40z" fill="#0a74cf"/>
    <path d="M601 743h23v16h-23z"/><path d="M608 743c0-6 9-6 9 0" fill="none" stroke="#111" stroke-width="1.400"/><path d="M607 745h5v5h-5z" fill="#f25022"/><path d="M613 745h5v5h-5z" fill="#7fba00"/><path d="M607 751h5v5h-5z" fill="#00a4ef"/><path d="M613 751h5v5h-5z" fill="#ffb900"/>
    <path d="M650 745l12-8 12 8v11h-24z"/><path d="M653 745h18l-8 7 1-4z" fill="#fff"/>
    <path d="M687 728h48v37h-48z" fill="#ebebeb"/><path d="M687 765h48v3h-48z" fill="#0a74cf"/><path d="M710 740h12v16h-12z" fill="#fff" stroke="#217346"/><path d="M713 743.500h7M713 746.500h7M713 749.500h7M713 752.500h7" stroke="#217346" stroke-width="1.600"/><path d="M699 739l14-3v23l-14-3z" fill="#1d7044"/><path d="M703 743l6 9M709 743l-6 9" stroke="#fff" stroke-width="1.800"/></svg>
  <svg width="100" height="40" viewBox="1113 728 100 40" fill="none" stroke="#111" stroke-width="1.300"><path d="M1117 751l5.500-5.500 5.500 5.500"/><path d="M1144.500 743.500h9v8h-9z"/><path d="M1146 745h6v5h-6z" fill="#111" stroke="none"/><path d="M1155 745.500v4M1140.500 741v3M1143.500 741v3M1139 744.500h4.500v3h-3.500zM1141.500 748v4h3" stroke-width="1.100"/><path d="M1167 753c0-6 5-11 11-11M1170 754c0-5 3-9 8-9M1173 754c0-3 2-6 5-6" stroke-width="1.100"/><circle cx="1176.500" cy="753.500" r="1.200" fill="#111"/><path d="M1187 745.500h2.500l3-4v13l-3-4h-2.500zM1195 745c1.500 2 1.500 4 0 6M1198 743c2 3 2 7 0 10M1200.500 741c3 4 3 10 0 14" stroke-width="1.100"/></svg>
  <span class="lang">ENG</span>
  <div class="text-center clock">07:08<br>16-06-2021</div>
  <svg width="59" height="40" viewBox="1307 728 59 40"><path d="M1325 740h16v12h-11l-3 3v-3h-2z"/><path d="M1328 743.500h10M1328 746.500h10M1328 749.500h7" stroke="#ccc"/><circle cx="1340.500" cy="755.500" r="7.500" fill="#cbcbcb" stroke="#666"/><text x="1340.500" y="759.500" text-anchor="middle" font-size="11">3</text><path d="M1361.500 728v40" stroke="#aaa"/></svg>
</div>

<script>
const NS='http://www.w3.org/2000/svg';
function add(svg,tag,attrs,text){const e=document.createElementNS(NS,tag);for(const k in attrs)e.setAttribute(k,attrs[k]);if(text!=null)e.textContent=text;svg.appendChild(e);return e}
/* grid headers */
const cols=document.getElementById('cols');
for(let i=0;i<31;i++){const d=document.createElement('div');d.textContent=i<26?String.fromCharCode(65+i):'A'+String.fromCharCode(39+i);if(i===20)d.className='sel';cols.appendChild(d)}
const rows=document.getElementById('rows');
for(let i=1;i<=52;i++){const d=document.createElement('div');d.textContent=i;if(i===5)d.className='sel';rows.appendChild(d)}
/* sales trend */
const s=document.getElementById('sales');
const px=[187,211,235,259,283,310,334,358,382,405,429,455,480,505,528,552,577,601,625,649,674,699,723,747,771,796,820,846,870,894,919,942,967,991,1015,1041].map(v=>v/3);
const pv=[406,406,406,387,391,381,356,342,405,363,357,391,393,394,360,376,388,411,394,391,396,391,394,391,381,426,399,414,402,387,376,400,399,420,387,391];
const py=pv.map(v=>200+v/3);
px.forEach((x,i)=>{if(i<35)add(s,'path',{d:`M${Math.floor(x)+.5} ${py[i]}V363`,stroke:'#c9c4cc','stroke-width':.9})});
add(s,'path',{d:'M62 363.500H347.500',stroke:'#fff'});
add(s,'path',{d:'M'+px.map((x,i)=>(x+.7)+' '+(py[i]+1.6)).join('L'),stroke:'#4472c4','stroke-width':1.8,fill:'none'});
for(let i=0;i<35;i++){const m=(pv[i]+pv[i+1])/2;add(s,'path',{d:`M${px[i]} ${py[i]}L${px[i+1]} ${py[i+1]}`,stroke:m>=408?'#ff4b4b':m>=397?'#ff8f8f':m>393?'#fbd3d8':'#fff','stroke-width':2})}
px.forEach((x,i)=>add(s,'circle',{cx:x,cy:py[i],r:1.6,fill:'#dfe6f5',stroke:'#7d97cf','stroke-width':.8}));
const sm={fill:'#e8e4ea','font-family':'Noto Sans','font-weight':'600'};
['$500k','$400k','$300k','$200k','$100k','$k'].forEach((t,i)=>add(s,'text',{...sm,x:56.5,y:304+i*12.3,'text-anchor':'end','font-size':6.8,textLength:i<5?19:7},t));
[186,232,281,329,378,427,478,524,573,622,671,719,771,817,866,914,963,1011].forEach((x,i)=>add(s,'text',{...sm,x:x/3,y:374.3,'text-anchor':'middle','font-size':5.4,textLength:i%6===3?9:11.5,lengthAdjust:'spacingAndGlyphs'},['Jan','Mar','May','Jul','Sep','Nov'][i%6]));
[['2017',62],['2018',159.5],['2019',257]].forEach(a=>add(s,'text',{...sm,x:a[1],y:382,'text-anchor':'middle','font-size':5.4,textLength:15},a[0]));
[[364.5,374.5,308,'#4472c4','1353k',337.5],[379.3,389.5,285.300,'#ed7d31','1412k',326],[393.500,404.500,297.500,'#a5a5a5','1381k',332.500],[408.500,419.500,299.500,'#ffc000','1376k',333.500],[423.500,434.500,323.500,'#5b9bd5','1314k',344.500],[438.500,449.500,275.500,'#70ad47','1440k',321.500],[453.500,464,325.500,'#3a3585','1309k',345.500]].forEach(b=>{
 const r={x:b[0],y:b[2],width:b[1]-b[0],height:366.5-b[2],fill:'none',stroke:b[3]};
 add(s,'rect',{...r,'stroke-width':3,'stroke-opacity':.25});add(s,'rect',{...r,'stroke-width':1.2});
 const cx=(b[0]+b[1])/2+2.6;add(s,'text',{x:0,y:0,transform:`translate(${cx} ${b[5]}) rotate(-90)`,'text-anchor':'middle',fill:'#fff','font-family':'Noto Sans','font-weight':'bold','font-size':7.4,textLength:21.5},b[4])});
/* acquisition waterfall */
const a=document.getElementById('acq');
add(a,'path',{d:'M279 541.500H477',stroke:'#b9a9c6'});
add(a,'path',{d:'M320 512.500H338M370 485.500H387M419 456.500H437',stroke:'#e6dfec'});
[[287.5,512.5,541.5,'1,947','Organic',28],[337.5,485.5,512.5,'1,851','Returning',36],[386.5,456.5,485.5,'1,982','Ad',11],[436.5,456.5,541.5,'5,780','Grand Total',42]].forEach((b,i)=>{
 add(a,'rect',{x:b[0],y:b[1],width:33,height:b[2]-b[1],fill:i===3?'url(#wr)':i===0?'url(#wg)':i===1?'#8c72a2':'#a58fb5',stroke:'#e6dfec'});
 add(a,'text',{x:b[0]+16.5,y:(b[1]+b[2])/2+3,'text-anchor':'middle','font-family':'Liberation Serif','font-size':8,fill:'#f2eaf5',textLength:18},b[3]);
 add(a,'text',{x:b[0]+16.5,y:555,'text-anchor':'middle','font-family':'Liberation Serif','font-size':10.500,stroke:'#fff','stroke-width':.25,fill:'#fff',textLength:b[5],lengthAdjust:'spacingAndGlyphs'},b[4])});
/* satisfaction stacked bars */
const t=document.getElementById('sat');
for(let i=0;i<6;i++){add(t,'path',{d:`M${Math.round(558+i*22.8)+.5} 323V513.500`,stroke:i?'#a88fbd':'#ddd','stroke-opacity':i?.75:1});
 add(t,'text',{...sm,x:558.5+i*22.8,y:526.3,'text-anchor':'middle','font-size':7,textLength:[9,12.500,12.500,12.500,12.500,16][i]},i*20+'%')}
[[569.7,588.7,638.3,660.7],[570.3,595.7,638.3,663.3],[571.3,594.7,635.3,660.7],[570.7,590.3,636.7,660.7],[568.7,592.3,638.7,662.3]].forEach((b,i)=>{
 const y=333.5+i*38,e=[558.7,...b,672.3];
 for(let k=0;k<5;k++)add(t,'rect',{x:e[k],y,width:e[k+1]-e[k],height:18,fill:`url(#${['lr','lp','lw','lg','ld'][k]})`});
 for(let k=1;k<5;k++)add(t,'path',{d:`M${e[k]} ${y}v18`,stroke:'#fff'});
 add(t,'path',{d:`M558.500 ${y}H672.500M558.500 ${y+18}H672.500`,stroke:'#fff'});
 add(t,'text',{...sm,x:523.5,y:y+11.8,'font-size':7,textLength:28.500},'Product '+(i+1))});
[['(1) very low',523,'#f33',28],['(2) low',560,'#ff69b4',16.500],['(3) ok',587,'#fff',14.500],['(4) high',610,'#7ab55c',19],['(5) very high',638,'#1d7a3c',30]].forEach(l=>{
 add(t,'rect',{x:l[1]+.5,y:537.5,width:3,height:3,fill:l[2],stroke:'#fff','stroke-width':.8});
 add(t,'text',{x:l[1]+4.5,y:541,'font-family':'Liberation Serif','font-size':6,fill:'#fff',textLength:l[3],lengthAdjust:'spacingAndGlyphs'},l[0])});
/* slicers */
const hd=(n,c)=>`<div class="sh"><span>${n}</span><svg class="ov" width="29" height="10" color="${c}"><use href="#sic"/><use href="#sfl"/></svg></div>`;
const it=l=>l.map(n=>`<div class="it">${n}</div>`).join('');
document.getElementById('slicers').innerHTML='<div class="s-y">'+hd('Years','#d5451c')+it(['2017','2018','2019'])+'</div><div class="s-p">'+hd('Product','#aaa')+it([1,2,3,4,5].map(n=>'Product '+n))+'</div><div class="s-a">'+hd('Customer Acquisition Type','#aaa')+it(['Ad','Organic','Returning'])+'</div>';
document.getElementById('states').innerHTML='<div class="stw">'+hd('State','#aaa')+'</div><div class="hz">'+it(['Alabama','Florida','Georgia','Mississippi','North Carolina','South Carolina','Tennessee'])+'</div>';
</script>
</body>
</html>
